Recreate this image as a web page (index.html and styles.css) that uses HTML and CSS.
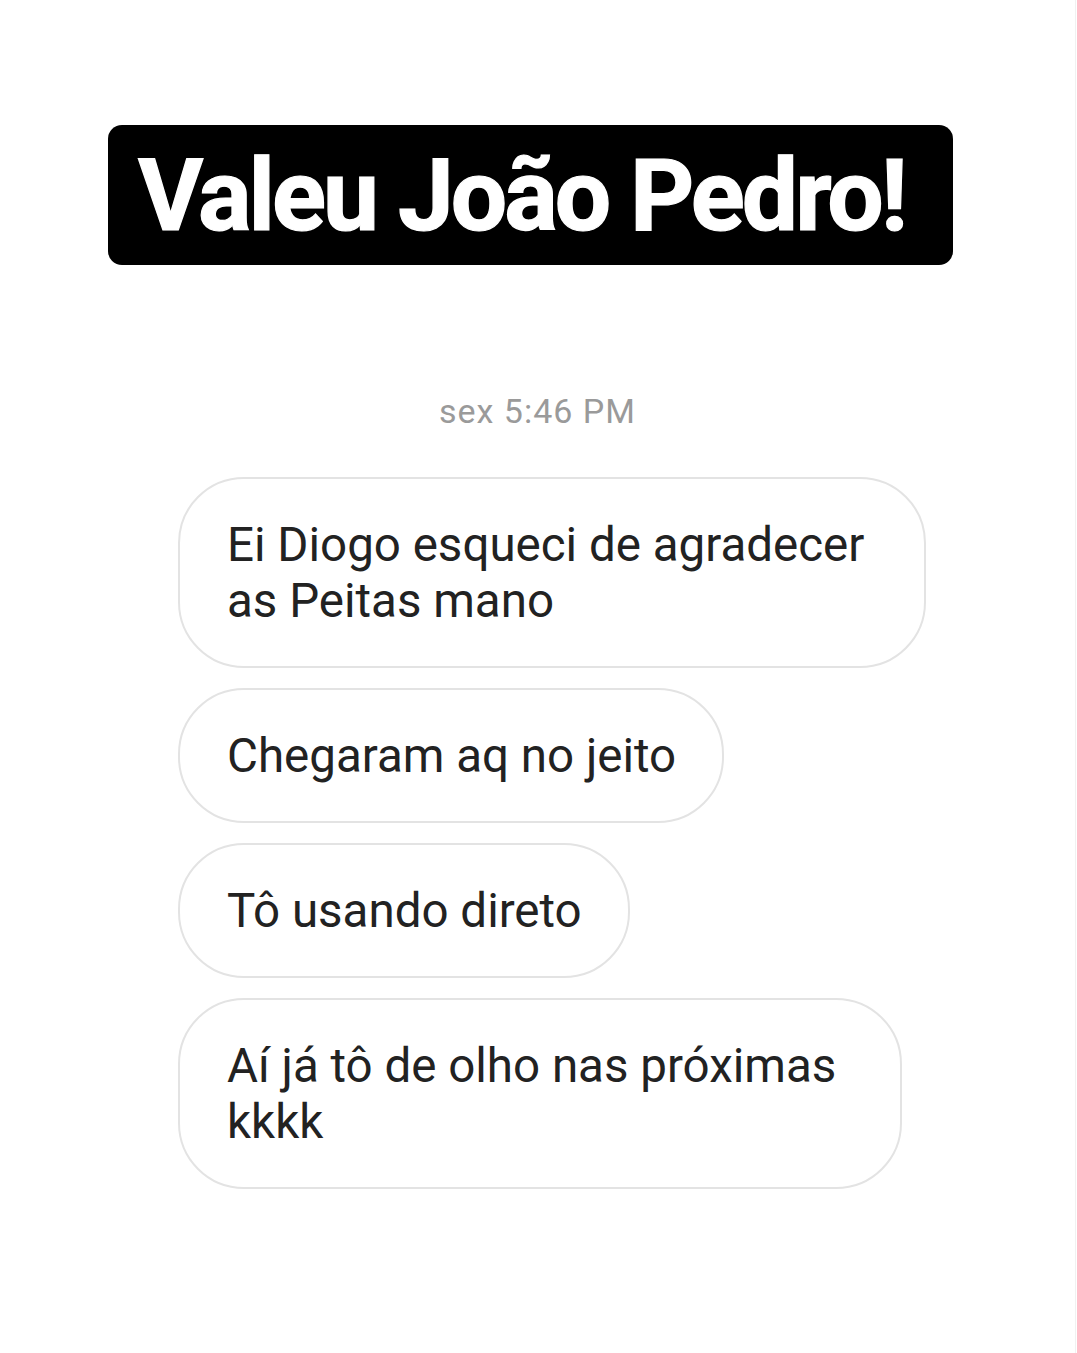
FILE: index.html
```html
<!DOCTYPE html>
<html lang="pt">
<head>
<meta charset="utf-8">
<title>Valeu João Pedro!</title>
<link rel="stylesheet" href="styles.css">
</head>
<body>
<main class="page">
  <header class="banner">
    <h1 class="banner-title">Valeu João Pedro!</h1>
  </header>
  <section class="chat">
    <p class="timestamp">sex 5:46 PM</p>
    <div class="messages">
      <div class="bubble bubble-wide">Ei Diogo esqueci de agradecer<br>as Peitas mano</div>
      <div class="bubble">Chegaram aq no jeito</div>
      <div class="bubble">Tô usando direto</div>
      <div class="bubble bubble-wide bubble-last">Aí já tô de olho nas próximas<br>kkkk</div>
    </div>
  </section>
</main>
</body>
</html>
```
FILE: styles.css
```css
html, body {
  margin: 0;
  padding: 0;
  background: #ffffff;
}

.page {
  width: 1076px;
  height: 1353px;
  border-right: 1px solid #f1f1f1;
  box-sizing: border-box;
  padding-top: 125px;
  overflow: hidden;
}

.banner {
  margin-left: 108px;
  width: 845px;
  height: 140px;
  background: #000000;
  border-radius: 14px;
  display: flex;
  align-items: center;
  box-sizing: border-box;
  padding-left: 30px;
}

.banner-title {
  margin: 0;
  font-family: Roboto, "Liberation Sans", Arial, sans-serif;
  font-weight: 700;
  font-size: 100px;
  letter-spacing: -3px;
  color: #ffffff;
  line-height: 1;
  white-space: nowrap;
  padding-top: 2px;
  -webkit-text-stroke: 1.2px #ffffff;
}

.chat {
  margin-top: 126px;
  display: flex;
  flex-direction: column;
}

.timestamp {
  margin: 0;
  text-align: center;
  font-family: Roboto, "Liberation Sans", sans-serif;
  font-size: 34px;
  letter-spacing: 1px;
  color: #9a9a9a;
  line-height: 40px;
}

.messages {
  margin-top: 46px;
  margin-left: 178px;
  display: flex;
  flex-direction: column;
  align-items: flex-start;
  gap: 20px;
}

.bubble {
  border: 2px solid #e3e3e3;
  border-radius: 66px;
  padding: 38px 46px 37px 47px;
  font-family: Roboto, "Liberation Sans", sans-serif;
  font-size: 47.5px;
  line-height: 56px;
  color: #222222;
  white-space: nowrap;
}

.bubble-wide {
  padding-right: 60px;
}

.bubble-last {
  padding-right: 64px;
}
```
